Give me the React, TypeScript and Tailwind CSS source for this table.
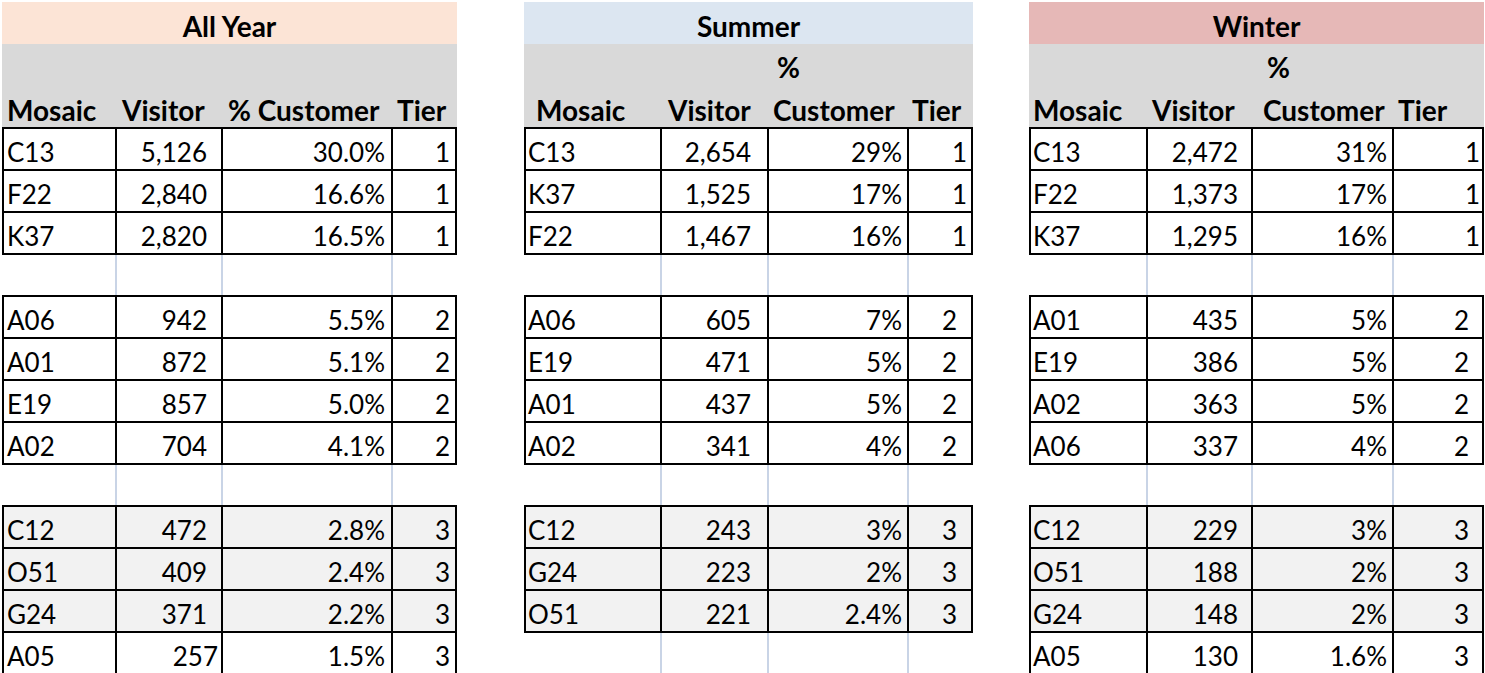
import clsx from "clsx";

type Row = { m: string; v: string; p: string; t: string; shade?: boolean; vPad?: string };

type TableDef = {
  title: string;
  titleBg: string;
  width: string;
  cols: string[];
  head: string[];
  pctPad: string;
  split: boolean;
  pad: { m: string; v: string; p: string; t1: string; t2: string };
  groups: Row[][];
  trailingBlank?: boolean;
};

const tables: TableDef[] = [
  {
    title: "All Year",
    titleBg: "bg-[#fce4d6]",
    width: "w-[455px]",
    cols: ["w-[113px]", "w-[106px]", "w-[170px]", "w-[62px]"],
    head: ["pl-[3px]", "pl-[5px]", "pl-[5px]", "pl-[4px]"],
    pctPad: "pl-[5px]",
    split: false,
    pad: { m: "pl-[3px]", v: "pr-[14px]", p: "pr-[6px]", t1: "pr-[5px]", t2: "pr-[5px]" },
    groups: [
      [
        { m: "C13", v: "5,126", p: "30.0%", t: "1" },
        { m: "F22", v: "2,840", p: "16.6%", t: "1" },
        { m: "K37", v: "2,820", p: "16.5%", t: "1" },
      ],
      [
        { m: "A06", v: "942", p: "5.5%", t: "2" },
        { m: "A01", v: "872", p: "5.1%", t: "2" },
        { m: "E19", v: "857", p: "5.0%", t: "2" },
        { m: "A02", v: "704", p: "4.1%", t: "2" },
      ],
      [
        { m: "C12", v: "472", p: "2.8%", t: "3", shade: true },
        { m: "O51", v: "409", p: "2.4%", t: "3", shade: true },
        { m: "G24", v: "371", p: "2.2%", t: "3", shade: true },
        { m: "A05", v: "257", p: "1.5%", t: "3", vPad: "pr-[3px]" },
      ],
    ],
  },
  {
    title: "Summer",
    titleBg: "bg-[#dce6f1]",
    width: "w-[449px]",
    cols: ["w-[136px]", "w-[107px]", "w-[140px]", "w-[62px]"],
    head: ["pl-[10px]", "pl-[6px]", "pl-[4px]", "pl-[3px]"],
    pctPad: "pl-[8px]",
    split: true,
    pad: { m: "pl-[2px]", v: "pr-[16px]", p: "pr-[5px]", t1: "pr-[4px]", t2: "pr-[14px]" },
    groups: [
      [
        { m: "C13", v: "2,654", p: "29%", t: "1" },
        { m: "K37", v: "1,525", p: "17%", t: "1" },
        { m: "F22", v: "1,467", p: "16%", t: "1" },
      ],
      [
        { m: "A06", v: "605", p: "7%", t: "2" },
        { m: "E19", v: "471", p: "5%", t: "2" },
        { m: "A01", v: "437", p: "5%", t: "2" },
        { m: "A02", v: "341", p: "4%", t: "2" },
      ],
      [
        { m: "C12", v: "243", p: "3%", t: "3", shade: true },
        { m: "G24", v: "223", p: "2%", t: "3", shade: true },
        { m: "O51", v: "221", p: "2.4%", t: "3", shade: true },
      ],
    ],
    trailingBlank: true,
  },
  {
    title: "Winter",
    titleBg: "bg-[#e6b8b7]",
    width: "w-[455px]",
    cols: ["w-[117px]", "w-[105px]", "w-[141px]", "w-[88px]"],
    head: ["pl-[2px]", "pl-[4px]", "pl-[10px]", "pl-[4px]"],
    pctPad: "pl-[14px]",
    split: true,
    pad: { m: "pl-[2px]", v: "pr-[13px]", p: "pr-[5px]", t1: "pr-[2px]", t2: "pr-[13px]" },
    groups: [
      [
        { m: "C13", v: "2,472", p: "31%", t: "1" },
        { m: "F22", v: "1,373", p: "17%", t: "1" },
        { m: "K37", v: "1,295", p: "16%", t: "1" },
      ],
      [
        { m: "A01", v: "435", p: "5%", t: "2" },
        { m: "E19", v: "386", p: "5%", t: "2" },
        { m: "A02", v: "363", p: "5%", t: "2" },
        { m: "A06", v: "337", p: "4%", t: "2" },
      ],
      [
        { m: "C12", v: "229", p: "3%", t: "3", shade: true },
        { m: "O51", v: "188", p: "2%", t: "3", shade: true },
        { m: "G24", v: "148", p: "2%", t: "3", shade: true },
        { m: "A05", v: "130", p: "1.6%", t: "3" },
      ],
    ],
  },
];

const BlankRow = ({ cols }: { cols: string[] }) => (
  <div className="flex h-[40px] px-[2px]">
    {cols.map((c, i) => (
      <div key={i} className={clsx(c, "h-full", i < 3 && "border-r-2 border-[#c9d4e6]")} />
    ))}
  </div>
);

const Table = ({ def }: { def: TableDef }) => {
  const { cols, pad } = def;
  return (
    <div className={clsx("flex shrink-0 flex-col", def.width)}>
      {/* title band */}
      <div
        className={clsx(
          "flex h-[42px] items-end justify-center pb-[2px] text-[28px] font-bold leading-[32px]",
          def.titleBg
        )}
      >
        {def.title}
      </div>

      {/* column headings */}
      <div className="flex h-[83px] flex-col bg-[#d9d9d9] px-[2px] text-[28px] font-bold leading-[32px]">
        <div className="flex h-[42px] items-end pb-[3px]">
          <div className={cols[0]} />
          <div className={cols[1]} />
          <div className={clsx(cols[2], def.pctPad)}>{def.split ? "%" : ""}</div>
        </div>
        <div className="flex h-[41px] items-end pb-[1px]">
          <div className={clsx(cols[0], def.head[0])}>Mosaic</div>
          <div className={clsx(cols[1], def.head[1])}>Visitor</div>
          <div className={clsx(cols[2], def.head[2], "whitespace-nowrap")}>
            {def.split ? "Customer" : "% Customer"}
          </div>
          <div className={clsx(cols[3], def.head[3])}>Tier</div>
        </div>
      </div>

      {def.groups.map((g, gi) => (
        <div key={gi}>
          {gi > 0 && <BlankRow cols={cols} />}
          <div className="border-2 border-black text-[26px] leading-[31px]">
            {g.map((r, ri) => (
              <div
                key={ri}
                className={clsx(
                  "flex",
                  ri < g.length - 1 ? "h-[42px] border-b-2 border-black" : "h-[40px]",
                  r.shade ? "bg-[#f2f2f2]" : "bg-white"
                )}
              >
                <div className={clsx(cols[0], pad.m, "flex items-end border-r-2 border-black pb-[1px]")}>
                  {r.m}
                </div>
                <div
                  className={clsx(
                    cols[1],
                    r.vPad ?? pad.v,
                    "flex items-end justify-end border-r-2 border-black pb-[1px]"
                  )}
                >
                  {r.v}
                </div>
                <div className={clsx(cols[2], pad.p, "flex items-end justify-end border-r-2 border-black pb-[1px]")}>
                  {r.p}
                </div>
                <div
                  className={clsx(
                    cols[3],
                    r.t === "1" ? pad.t1 : pad.t2,
                    "flex items-end justify-end pb-[1px]"
                  )}
                >
                  {r.t}
                </div>
              </div>
            ))}
          </div>
        </div>
      ))}
      {def.trailingBlank && <BlankRow cols={cols} />}
    </div>
  );
};

export default function App() {
  return (
    <div
      className="h-[673px] w-[1485px] overflow-hidden bg-white text-black"
      style={{ fontFamily: "Lato, 'Liberation Sans', sans-serif" }}
    >
      <div className="flex pl-[2px] pt-[2px]">
        <Table def={tables[0]} />
        <div className="w-[67px] shrink-0" />
        <Table def={tables[1]} />
        <div className="w-[56px] shrink-0" />
        <Table def={tables[2]} />
      </div>
    </div>
  );
}
